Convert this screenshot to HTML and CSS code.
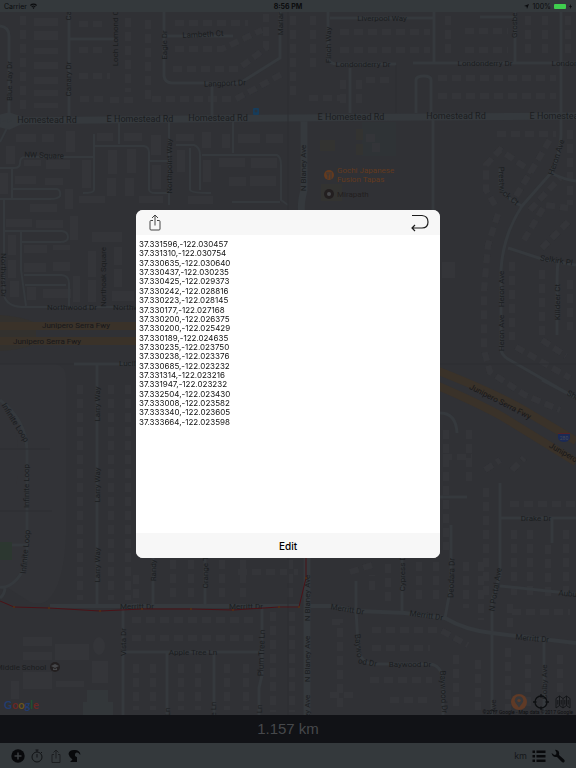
FILE: index.html
```
<!DOCTYPE html>
<html lang="en">
<head>
    <meta charset="UTF-8">
    <meta name="viewport" content="width=device-width, initial-scale=1.0">
    <title>Route Planner</title>
    <link rel="stylesheet" href="styles.css">
</head>
<body>
    <div class="app">
        <!-- Status bar -->
        <header class="status-bar">
            <div class="status-left">
                <span>Carrier</span>
                <svg class="wifi" viewBox="0 0 14 12" width="7" height="6"><path d="M0 4a10 10 0 0 1 14 0l-1.6 1.8a8 8 0 0 0-10.800 0zM2.700 6.800a6.400 6.400 0 0 1 8.600 0L9.800 8.500a4.200 4.200 0 0 0-5.600 0zM7 12L5 9.500a3 3 0 0 1 4 0z"/></svg>
            </div>
            <span class="status-time">8:56 PM</span>
            <div class="status-right">
                <svg viewBox="0 0 10 10" width="5" height="5"><path d="M10 0L6 10 5 5 0 4z"/></svg>
                <span>100%</span>
                <span class="battery"></span>
                <svg viewBox="0 0 6 10" width="3" height="5"><path d="M4 0L0 6h2.500L2 10l4-6H3.500z"/></svg>
            </div>
        </header>

        <!-- Map -->
        <main class="map">
            <svg class="map-canvas" viewBox="0 12 576 703" preserveAspectRatio="xMidYMid slice">
                <path class="area" d="M0 364H56Q66 366 66 378V535Q64 585 48 600Q40 606 30 602L8 588H0z"/>
                <path class="area" d="M0 432H14Q18 436 18 448V475L16 485V540H0z"/>
                <path class="park" d="M0 542h12v18H0z"/>
                <path class="plaza" d="M362 122h34v34h-34z"/>
                <path class="shop" d="M320 140h15v11h-15zM356 129h7v11h-7zM356 144h7v11h-7zM321 184h21v17h-21z"/>
                <path class="pool" d="M87 690h21v12h5v13H83v-13h4z"/>

                
                <g id="houses" class="houses">
                    <path d="M23 16V112"/>
                    <path d="M79 24H106M79 50H106M79 76H110M80 99H106M128 18V92M148 20V100"/>
                    <path d="M175 23H248M175 49H222L262 30M173 69H238L266 48V14M152 99H236L282 74M110 100H136"/>
                    <path d="M293 16V100M313 16V70M340 32H430M340 50H430M343 80V106M359 80V106M366 80H394M309 98H340"/>
                    <path d="M448 16V58M465 31H508M465 50H508M528 16V58M545 16V58M568 16V58M438 78H556M438 96H556"/>
                    <path d="M497 134H556M495 205L486 190V165L500 150L532 172M516 196L538 160L552 136M530 210L560 178M570 130V205"/>
                    <path d="M498 214L488 245L484 290V350L490 372L525 395L560 410M512 262V340M524 240L545 205L568 208M542 270V340L566 356M570 280V330M516 347L570 378M568 222L540 250"/>
                    <path d="M80 385V600M111 385V600M128 385V600M446 430V550M469 430V486M443 457H472M485 470L500 460M510 504H576M512 470L524 458M486 488V600M514 530V600M530 530V600M548 545V600M566 530V600"/>
                    <path d="M136 575V605M173 560V602M191 560V602M222 560V602M238 572H298M243 560V602M290 560V600M332 622H340V708M350 572L372 565M372 590V575M388 564V602M419 562V602M436 562V602M466 562V608M481 562V620"/>
                    <path d="M132 620H258M132 638H258M136 664V710M153 664V710M181 664V710M198 664V710M227 664V710M246 664V710M273 612V712M292 612V712"/>
                    <path d="M372 630H440L468 645M372 648H430M370 680H432M456 655V710M478 660V710M510 604V630M512 612H570M508 648V710M528 655V710M560 655V700M390 700L430 700M330 695H354"/>
                </g>
                <use href="#houses" class="houses-wide"/>
                <g class="building">
                    <path d="M34 18h24v8H34zM34 31h24v9H34zM34 48h24v6H34zM34 62h24v7H34zM34 77h24v7H34zM34 90h24v6H34zM34 103h24v5H34z"/>
                    <path d="M66 131h9v21h-9zM97 133h16v8H97zM124 133h18v8h-18zM16 134h20v8H16zM42 134h12v8H42zM6 146h9v18H6zM24 160h17v6H24zM46 160h24v9H46zM82 160h9v28h-9z"/>
                    <path d="M108 150h9v24h-9zM127 149h9v24h-9zM107 178h9v18h-9zM125 178h9v18h-9zM151 135h10v20h-10zM152 165h9v24h-9zM177 150h8v22h-8zM176 134h18v7h-18zM202 132h9v16h-9zM222 134h8v14h-8zM238 134h22v9h-22zM266 134h17v9h-17z"/>
                    <path d="M203 160h8v22h-8zM219 158h26v9h-26zM251 158h26v10h-26zM229 177h17v9h-17zM250 176h26v10h-26zM79 196h26v7H79zM139 196h24v7h-24zM188 196h25v8h-25zM15 176h21v8H15zM45 178h18v7H45z"/>
                    <path d="M0 173h8v21H0zM65 189h8v20h-8zM30 204h27v8H30zM6 219h26v8H6zM36 220h27v8H36zM70 216h8v24h-8zM8 235h8v20H8zM8 260h8v18H8zM10 281h9v16h-9zM24 245h23v8H24zM53 245h17v5H53zM24 263h22v9H24zM53 262h17v9H53z"/>
                    <path d="M27 287h9v13h-9zM43 289h28v9H43zM73 276h7v26h-7zM92 232h30v10H92zM88 251h8v26h-8zM114 247h8v18h-8zM114 269h8v18h-8zM88 280h8v22h-8zM112 291h22v10h-22zM442 262h13v16h-13zM366 134h9v8h-9zM372 143h8v9h-8z"/>
                    <path d="M23 637h29v9H23zM23 652h29v8H23zM55 644h34v16H55zM23 672h29v17H23zM56 681h28v6H56zM11 681h8v18h-8zM92 661h16v22H92z"/>
                    <ellipse cx="99" cy="646" rx="6" ry="9"/>
                </g>

                <!-- Streets -->
                <g class="street">
                    <path d="M0 26Q9 27 9 36V116M69 12V118M69 39H114M164 12V76Q165 83 172 83H240L280 58V12M164 36H233M212 83V116"/>
                    <path class="thin" d="M119 122V144M94 134V190Q94 193 83 193M95 146H144Q149 147 149 152V190Q150 193 155 193H168M169 122V205M150 161H169M176 145H194Q200 147 200 155V190M190 148V190Q191 193 211 193M202 155H277Q281 157 281 165V200L288 205M233 122V153M232 202H280"/>
                    <path class="thin" d="M93 157H25Q20 157 20 163Q20 168 14 168H0M12 168V199M12 189H57Q61 190 60 196Q58 199 50 199H0M7 128L0 142M4 200V295Q6 306 22 307H140M5 231H62Q68 232 68 237Q68 242 60 242H20M21 232V270L26 306M24 275H62Q69 276 69 283V306M25 285H66"/>
                    <path d="M330 18H434M328 12V58Q329 64 338 64H396M434 12V62M413 63H576M480 17H515M515 12V62M416 113V80Q416 76 424 76Q431 76 431 80V113M350 68V113M433 120V212"/>
                    <path d="M561 12V135Q560 155 551 173L522 206Q503 235 501 270V348Q501 355 508 359L567 393L576 398M551 173Q565 180 576 181M500 167V185Q503 197 522 206M508 248L545 260L576 265M558 262Q557 270 557 290V335M542 380L576 398"/>
                    <path d="M74 364H140M97 365V605M0 400Q26 420 27 450V550Q26 575 10 585Q5 588 0 587M12 545H26M5 587Q5 594 0 598"/>
                    <path d="M440 413Q456 413 457 433M500 483V575L492 600V715M501 518H576M552 518V543M440 497H467M451 525V585L445 618M402 558V612M500 586L576 594"/>
                    <path class="wide" d="M310 606H330L358 611L405 613L445 618Q465 630 492 633L576 643M50 606H300"/>
                    <path d="M356 581V610L358 645Q359 664 375 664H430Q441 665 443 680V715M544 642V715M153 558V605M205 558V605M123 605V715M123 652H262M167 652V715M214 652V715M262 607V675L259 688V715"/>
                    <path class="main" d="M0 121L100 120L288 118L430 117L576 116M304 120V190Q300 205 302 214M307 555V715"/>
                    <path class="main" d="M0 118L9 116L18 119V122L9 126L0 124"/>
                </g>
                <path class="hairline" d="M0 364H74M0 511H52M0 449H50M396 65V113M440 364H576M288 12V250M288 558V715"/>
                <path class="freeway-ramp" d="M0 315Q20 316 36 323V344Q20 350 0 351z"/>
                <path class="freeway" d="M0 326H140M0 341H140M436 370Q500 395 532 415L576 441M436 385Q480 404 503 417L576 462"/>

                <!-- Street names -->
                <g class="labels">
                    <g class="labels-main">
                        <text x="47" y="123">Homestead Rd</text>
                        <text x="140" y="122">E Homestead Rd</text>
                        <text x="218" y="121">Homestead Rd</text>
                        <text x="351" y="120">E Homestead Rd</text>
                        <text x="456" y="119">Homestead Rd</text>
                        <text x="563" y="119">E Homestead Rd</text>
                    </g>
                    <text x="44" y="158" transform="rotate(2 44 158)">NW Square</text>
                    <text x="203" y="37" transform="rotate(-3 203 37)">Lambeth Ct</text>
                    <text x="225" y="86" transform="rotate(-2 225 86)">Langport Dr</text>
                    <text x="382" y="21">Liverpool Way</text>
                    <text x="363" y="67">Londonderry Dr</text>
                    <text x="485" y="66">Londonderry Dr</text>
                    <text x="579" y="66">Londonderry Dr</text>
                    <text x="72" y="310">Northwood Dr</text>
                    <text x="138" y="310">Northwood Dr</text>
                    <text x="76" y="328" class="freeway-name">Junipero Serra Fwy</text>
                    <text x="47" y="344" class="freeway-name">Junipero Serra Fwy</text>
                    <text x="138" y="366">Lucille Ave</text>
                    <text x="137" y="609">Merritt Dr</text>
                    <text x="246" y="609">Merritt Dr</text>
                    <text x="193" y="655">Apple Tree Ln</text>
                    <text x="21" y="670">Middle School</text>
                    <text x="410" y="667">Baywood Dr</text>
                    <text x="536" y="521">Drake Dr</text>
                    <text x="576" y="597" transform="rotate(5 576 597)">Auburn Dr</text>
                    <text x="580" y="402" transform="rotate(28 580 402)">Shetland</text>
                    <text transform="translate(12 81) rotate(-90)">Blue Jay Dr</text>
                    <text transform="translate(71 79) rotate(-90)">Canary Dr</text>
                    <text transform="translate(71 3) rotate(-90)">Canary Dr</text>
                    <text transform="translate(118 37) rotate(-90)">Loch Lomond Ct</text>
                    <text transform="translate(167 45) rotate(-90)">Eagle Dr</text>
                    <text transform="translate(283 18) rotate(-90)">Marian Ct</text>
                    <text transform="translate(172 166) rotate(-90)">Northpoint Way</text>
                    <text transform="translate(331 45) rotate(-90)">Finch Way</text>
                    <text transform="translate(517 21) rotate(-90)">Grosbeak</text>
                    <text transform="translate(306 168) rotate(-90)">N Blaney Ave</text>
                    <text transform="translate(559 158) rotate(-72)">Heron Ave</text>
                    <text transform="translate(499 180) rotate(88)">Prestwi</text>
                    <text transform="translate(509 200) rotate(40)">ck Ct</text>
                    <text transform="translate(556 263) rotate(9)">Selkirk Pl</text>
                    <text transform="translate(560 302) rotate(-90)">Killdeer Ct</text>
                    <text transform="translate(504 289) rotate(-90)">Heron Ave</text>
                    <text transform="translate(504 333) rotate(-90)">Heron Ave</text>
                    <text transform="translate(1 275) rotate(90)">Northurst Dr</text>
                    <text transform="translate(106 277) rotate(-90)">Northoak Square</text>
                    <text transform="translate(100 404) rotate(-90)">Larry Way</text>
                    <text transform="translate(100 485) rotate(-90)">Larry Way</text>
                    <text transform="translate(100 565) rotate(-90)">Larry Way</text>
                    <text transform="translate(13 424) rotate(58)">Infinite Loop</text>
                    <text transform="translate(29 486) rotate(-90)">Infinite Loop</text>
                    <text transform="translate(28 552) rotate(-84)">Infinite Loop</text>
                    <text transform="translate(499 404) rotate(27)" class="freeway-name">Junipero Serra Fwy</text>
                    <text transform="translate(578 464) rotate(30)" class="freeway-name">Junipero Serra Fwy</text>
                    <text transform="translate(156 565) rotate(-90)">Randy Ln</text>
                    <text transform="translate(208 567) rotate(-90)">Orange Tree</text>
                    <text transform="translate(126 642) rotate(-90)">Vista Dr</text>
                    <text transform="translate(264 653) rotate(-88)">Plum Tree Ln</text>
                    <text transform="translate(170 712) rotate(-90)">Ln</text>
                    <text transform="translate(216 709) rotate(-90)">e Ln</text>
                    <text transform="translate(262 709) rotate(-90)">Ln</text>
                    <text transform="translate(310 598) rotate(-90)">N Blaney Ave</text>
                    <text transform="translate(310 659) rotate(-90)">N Blaney Ave</text>
                    <text transform="translate(310 718) rotate(-90)">N Blaney Ave</text>
                    <text transform="translate(405 572) rotate(-90)">Cypress Dr</text>
                    <text transform="translate(454 578) rotate(-88)">Deodara Dr</text>
                    <text transform="translate(498 590) rotate(-80)">N Portal Ave</text>
                    <text transform="translate(496 706) rotate(-90)">Ave</text>
                    <text transform="translate(547 682) rotate(-90)">Colby Ave</text>
                    <text transform="translate(347 612) rotate(9)">Merritt Dr</text>
                    <text transform="translate(426 618) rotate(8)">Merritt Dr</text>
                    <text transform="translate(532 641) rotate(5)">Merritt Dr</text>
                    <text transform="translate(356 646) rotate(84)">Baywo</text>
                    <text transform="translate(367 665) rotate(10)">od Dr</text>
                    <text transform="translate(441 692) rotate(87)">Baywood Dr</text>
                </g>

                <!-- Places -->
                <g class="place-food">
                    <circle cx="329" cy="175" r="5"/>
                    <path d="M327 172v2q0 1 1 1v4M329 172v2q0 1-1 1M331 179v-7" class="place-fork"/>
                    <text x="337" y="173">Gochi Japanese</text>
                    <text x="337" y="182">Fusion Tapas</text>
                </g>
                <g class="place">
                    <circle cx="329" cy="194" r="5"/>
                    <circle cx="329" cy="194" r="2" class="place-dot"/>
                    <text x="337" y="197">Mirapath</text>
                    <circle cx="55" cy="667" r="5"/>
                    <path d="M51 666l4-2 4 2-4 2zM53 668v2h4v-2l-2 1z" class="place-dot"/>
                </g>
                <g class="bus-stop">
                    <rect x="253" y="108" width="6" height="7" rx="1"/>
                    <circle cx="256" cy="111" r="1"/>
                </g>
                <g class="shield">
                    <path d="M558 434h12q1 8-6 8t-6-8z"/>
                    <path class="shield-top" d="M558 433h12v1h-12z"/>
                    <text x="564" y="440">280</text>
                </g>

                <!-- Planned route -->
                <path class="route" d="M0 601L14 607L49 608L100 611L142 609L191 609L233 610L279 607L299 607L306 578V555"/>
                <g class="route-points">
                    <circle cx="14" cy="607" r="1"/><circle cx="49" cy="608" r="1"/><circle cx="100" cy="611" r="1"/>
                    <circle cx="142" cy="609" r="1"/><circle cx="191" cy="609" r="1"/><circle cx="233" cy="610" r="1"/>
                    <circle cx="279" cy="607" r="1"/><circle cx="299" cy="607" r="1"/><circle cx="306" cy="578" r="1"/>
                </g>
            </svg>

            <div class="google-logo"><span class="g-blue">G</span><span class="g-red">o</span><span class="g-yellow">o</span><span class="g-blue">g</span><span class="g-green">l</span><span class="g-red">e</span></div>
            <div class="map-controls">
                <button type="button" class="icon-button" aria-label="Drop pin">
                    <svg viewBox="0 0 16 16" width="16" height="16"><circle cx="8" cy="8" r="8" fill="#5f3a26"/><path d="M8 13.500Q3.700 8.500 3.700 6.600a4.300 4.300 0 0 1 8.600 0Q12.300 8.500 8 13.500z" fill="#36373a"/><circle cx="8" cy="6.600" r="1.700" fill="#5f3a26"/></svg>
                </button>
                <button type="button" class="icon-button" aria-label="My location">
                    <svg viewBox="0 0 16 16" width="16" height="16" fill="none" stroke="#0d0f11" stroke-width="1.300"><circle cx="8" cy="8" r="6"/><path d="M8 0v3.500M8 12.500v3.500M0 8h3.500M12.500 8h3.500"/></svg>
                </button>
                <button type="button" class="icon-button" aria-label="Map type">
                    <svg viewBox="0 0 16 16" width="16" height="16" fill="none" stroke="#121416" stroke-width=".9"><path d="M1 4.500l3.500-2.500 3.500 2.500 3.500-2.500L15 4.500v9.500l-3.500-2.500L8 14l-3.500-2.500L1 14zM4.500 2v9.500M8 4.500V14M11.500 2v9.500M2.800 6v4.500M6.200 6v4.500M9.800 6v4.500M13.200 6v4.500"/></svg>
                </button>
            </div>
            <div class="copyright">©2017 Google - Map data ©2017 Google</div>
        </main>

        <div class="distance">1.157 km</div>

        <!-- Toolbar -->
        <footer class="toolbar">
            <button type="button" class="icon-button" aria-label="Add">
                <svg viewBox="0 0 14 14" width="14" height="14"><circle cx="7" cy="7" r="6.700" fill="#08090b"/><path d="M7 3.500v7M3.500 7h7" stroke="#3b3f42" stroke-width="1.500"/></svg>
            </button>
            <button type="button" class="icon-button" aria-label="Timer">
                <svg viewBox="0 0 14 14" width="14" height="14" fill="none" stroke="#111315"><circle cx="7" cy="8" r="5"/><path d="M5.500 1h3M7 1v2M7 5v3.500M11 3l1 1"/></svg>
            </button>
            <button type="button" class="icon-button" aria-label="Share route">
                <svg viewBox="0 0 14 14" width="14" height="14" fill="none" stroke="#1c1e20"><path d="M5 5.500H3v8h8v-8H9M7 9.500V1M4.500 3.500L7 1l2.500 2.500"/></svg>
            </button>
            <button type="button" class="icon-button" aria-label="Undo">
                <svg viewBox="0 0 14 14" width="14" height="14" fill="#08090b"><path d="M.5 5Q1 1 6 1Q11.500.5 12.500 5.500L11.800 5.500Q10.500 3.200 8.500 3.600Q6.300 4.500 7 7L9 8.200V13H2L4.500 10.500Q1.500 9 .5 5z"/></svg>
            </button>
            <button type="button" class="unit-button">km</button>
            <button type="button" class="icon-button" aria-label="List">
                <svg viewBox="0 0 14 14" width="14" height="14" fill="#08090b"><path d="M.5 1.500h2.500v2.500H.5zM4.500 1.500H13.500v2.500H4.500zM.5 6h2.500v2.500H.5zM4.500 6H13.500v2.500H4.500zM.5 10.500h2.500V13H.5zM4.500 10.500H13.500V13H4.500z"/></svg>
            </button>
            <button type="button" class="icon-button" aria-label="Settings">
                <svg viewBox="0 0 14 14" width="14" height="14" fill="#08090b"><path d="M4 .8Q8 .8 8.200 4.500L8 6l5 4.600q1.300 1.300.2 2.400-1.200 1.100-2.500-.2L6 7.900Q1.500 8.700.6 4l2.700 2 1.900-.6.2-2z"/></svg>
            </button>
        </footer>
    </div>

    <!-- Coordinates dialog -->
    <div class="overlay">
        <section class="dialog" role="dialog" aria-label="Coordinates">
            <div class="dialog-header">
                <button type="button" class="icon-button" aria-label="Share">
                    <svg viewBox="0 0 12 18" width="12" height="18" fill="none" stroke="#444"><path d="M4 6.500H2Q1 6.500 1 7.500V15Q1 16 2 16H10Q11 16 11 15V7.500Q11 6.500 10 6.500H8M6 11.500V1.500M3 4L6 1L9 4"/></svg>
                </button>
                <button type="button" class="icon-button" aria-label="Back">
                    <svg viewBox="0 0 18 18" width="18" height="18" fill="none" stroke="#1c1c1c" stroke-width="1.200"><path d="M1 1.500H11Q17 2 17 8Q17 14 11 14H1M4 11L1 14L4 17"/></svg>
                </button>
            </div>
            <textarea class="coordinates" aria-label="Route coordinates" readonly>37.331596,-122.030457
37.331310,-122.030754
37.330635,-122.030640
37.330437,-122.030235
37.330425,-122.029373
37.330242,-122.028816
37.330223,-122.028145
37.330177,-122.027168
37.330200,-122.026375
37.330200,-122.025429
37.330189,-122.024635
37.330235,-122.023750
37.330238,-122.023376
37.330685,-122.023232
37.331314,-122.023216
37.331947,-122.023232
37.332504,-122.023430
37.333008,-122.023582
37.333340,-122.023605
37.333664,-122.023598</textarea>
            <button type="button" class="edit-button">Edit</button>
        </section>
    </div>
</body>
</html>
```

FILE: styles.css
```
* {
    box-sizing: border-box;
}

body {
    margin: 0;
    font-family: Inter, "Liberation Sans", sans-serif;
    background-color: #303135;
}

button {
    padding: 0;
    border: none;
    background: none;
    font-family: inherit;
    cursor: pointer;
}

svg {
    display: block;
}

.app {
    display: flex;
    flex-direction: column;
    height: 100vh;
}

.icon-button {
    display: flex;
}

/* Status bar */
.status-bar {
    display: grid;
    grid-template-columns: 1fr auto 1fr;
    align-items: center;
    height: 12px;
    padding: 0 4px;
    background-color: #34393c;
    color: #0b0c0e;
    fill: #0b0c0e;
    font-size: 7px;
}

.status-left,
.status-right {
    display: flex;
    align-items: center;
    gap: 3px;
}

.status-right {
    justify-content: flex-end;
}

.status-time {
    font-weight: bold;
}

.battery {
    width: 12px;
    height: 5px;
    border-radius: 1px;
    background-color: #3fcf4e;
}

/* Map */
.map {
    position: relative;
    flex: 1;
    min-height: 0;
    overflow: hidden;
}

.map-canvas {
    width: 100%;
    height: 100%;
    font-family: Roboto, sans-serif;
    font-size: 8px;
}

.area {
    fill: #323337;
}

.park {
    fill: #2c3730;
}

.plaza {
    fill: #2f3336;
}

.shop {
    fill: #333331;
}

.pool {
    fill: #33373a;
}

.building {
    fill: #343539;
}

.houses {
    fill: none;
    stroke: #343539;
    stroke-width: 6;
    stroke-dasharray: 9 5;
}

.houses-wide {
    stroke-width: 9;
}

.street {
    fill: none;
    stroke: #35393d;
    stroke-width: 3;
}

.street .thin {
    stroke-width: 2;
}

.street .wide {
    stroke-width: 4;
}

.street .main {
    stroke-width: 7;
}

.hairline {
    fill: none;
    stroke: #2d2f33;
}

.freeway {
    fill: none;
    stroke: #3a3229;
    stroke-width: 8;
}

.freeway-ramp {
    fill: #33312e;
}

.labels {
    fill: #1b1d1f;
    text-anchor: middle;
}

.labels-main {
    font-size: 9px;
}

.freeway-name {
    fill: #17171a;
}

.place-food {
    fill: #633a1e;
}

.place-fork {
    fill: none;
    stroke: #36373a;
}

.place {
    fill: #231f20;
}

.place-dot {
    fill: #46474a;
}

.bus-stop rect {
    fill: #163c5b;
}

.bus-stop circle {
    fill: none;
    stroke: #303135;
}

.shield {
    fill: #1b2a55;
    font-size: 5px;
    text-anchor: middle;
}

.shield-top {
    fill: #552228;
}

.shield text {
    fill: #4a4d55;
}

.route {
    fill: none;
    stroke: #4b1217;
    stroke-width: 1;
}

.route-points {
    fill: #553012;
}

.google-logo {
    position: absolute;
    left: 4px;
    bottom: 3px;
    font-family: Lato, sans-serif;
    font-size: 11px;
    font-weight: bold;
    line-height: 14px;
}

.g-blue {
    color: #213c6e;
}

.g-red {
    color: #6a2724;
}

.g-yellow {
    color: #6b561a;
}

.g-green {
    color: #1f5230;
}

.map-controls {
    position: absolute;
    right: 5px;
    bottom: 5px;
    display: flex;
    gap: 6px;
}

.copyright {
    position: absolute;
    right: 3px;
    bottom: 0;
    font-family: Roboto, sans-serif;
    font-size: 5px;
    line-height: 6px;
    color: #0d0e10;
}

.distance {
    height: 28px;
    background-color: #111216;
    color: #46484b;
    font-family: "Liberation Sans", Arial, sans-serif;
    font-size: 15px;
    line-height: 28px;
    text-align: center;
}

/* Toolbar */
.toolbar {
    display: flex;
    align-items: center;
    gap: 5px;
    height: 25px;
    padding: 0 11px;
    background-color: #34393c;
}

.unit-button {
    margin-left: auto;
    color: #15171a;
    font-size: 9px;
}

/* Coordinates dialog */
.overlay {
    position: fixed;
    inset: 0;
    display: flex;
    align-items: center;
    justify-content: center;
}

.dialog {
    display: flex;
    flex-direction: column;
    width: 304px;
    max-width: 90%;
    height: 348px;
    max-height: 90%;
    border-radius: 7px;
    overflow: hidden;
    background-color: #fff;
}

.dialog-header {
    display: flex;
    align-items: center;
    justify-content: space-between;
    height: 25px;
    padding: 0 11px 0 13px;
    background-color: #f7f7f7;
}

.coordinates {
    flex: 1;
    padding: 5px 3px;
    border: none;
    outline: none;
    resize: none;
    color: #111;
    font-family: inherit;
    font-size: 8px;
    line-height: 1.17;
}

.edit-button {
    height: 25px;
    background-color: #f7f7f7;
    color: #000;
    font-size: 10px;
    font-weight: 500;
}
```
